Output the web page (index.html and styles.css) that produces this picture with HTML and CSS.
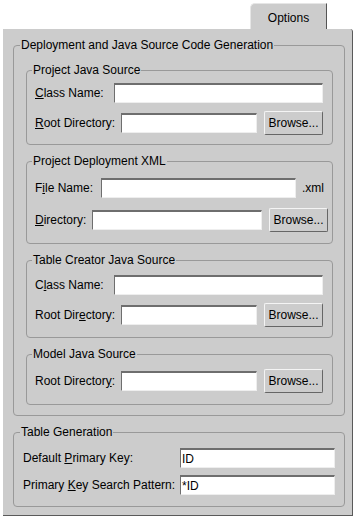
FILE: index.html
```html
<!DOCTYPE html>
<html>
<head>
<meta charset="utf-8">
<link rel="stylesheet" href="styles.css">
</head>
<body>
<div class="tabs">
  <div class="tab">Options</div>
</div>
<div class="panel">
  <fieldset class="group outer">
    <legend>Deployment and Java Source Code Generation</legend>

    <fieldset class="group inner fs1">
      <legend>Project Java Source</legend>
      <div class="row">
        <span class="label l-class"><u>C</u>lass Name:</span>
        <span class="input w-class"></span>
      </div>
      <div class="row brow">
        <span class="label l-root"><u>R</u>oot Directory:</span>
        <span class="input w-root"></span>
        <span class="button">Browse...</span>
      </div>
    </fieldset>

    <fieldset class="group inner fs2">
      <legend>Project Deployment XML</legend>
      <div class="row">
        <span class="label l-file">F<u>i</u>le Name:</span>
        <span class="input w-file"></span>
        <span class="suffix">.xml</span>
      </div>
      <div class="row brow">
        <span class="label l-dir"><u>D</u>irectory:</span>
        <span class="input w-dir"></span>
        <span class="button">Browse...</span>
      </div>
    </fieldset>

    <fieldset class="group inner fs3">
      <legend>Table Creator Java Source</legend>
      <div class="row">
        <span class="label l-class">C<u>l</u>ass Name:</span>
        <span class="input w-class"></span>
      </div>
      <div class="row brow">
        <span class="label l-root">Root Dir<u>e</u>ctory:</span>
        <span class="input w-root"></span>
        <span class="button">Browse...</span>
      </div>
    </fieldset>

    <fieldset class="group inner fs4">
      <legend>Model Java Source</legend>
      <div class="row brow">
        <span class="label l-root">Root Director<u>y</u>:</span>
        <span class="input w-root"></span>
        <span class="button">Browse...</span>
      </div>
    </fieldset>
  </fieldset>

  <fieldset class="group table-gen">
    <legend>Table Generation</legend>
    <div class="row krow">
      <span class="label klabel">Default <u>P</u>rimary Key:</span>
      <span class="input w-key">ID</span>
    </div>
    <div class="row krow">
      <span class="label klabel">Primary <u>K</u>ey Search Pattern:</span>
      <span class="input w-key">*ID</span>
    </div>
  </fieldset>
</div>
</body>
</html>
```

FILE: styles.css
```css
html, body {
  margin: 0;
  padding: 0;
  background: #ffffff;
}
body {
  font-family: "Liberation Sans", Arial, sans-serif;
  font-size: 12px;
  color: #000;
  width: 357px;
  height: 518px;
  overflow: hidden;
}
u {
  text-decoration: underline;
  text-underline-offset: 1px;
}
.tabs {
  display: flex;
  padding-left: 250px;
  padding-top: 3px;
}
.tab {
  width: 77px;
  height: 26px;
  box-sizing: border-box;
  background: #cccccc;
  border-top: 1px solid #e6e6e6;
  border-left: 1px solid #e6e6e6;
  border-right: 1px solid #555555;
  border-top-left-radius: 5px;
  display: flex;
  align-items: center;
  justify-content: center;
  padding-top: 2px;
}
.panel {
  margin-left: 3px;
  width: 350px;
  height: 487px;
  box-sizing: border-box;
  background: #cccccc;
  border-right: 1px solid #5a5a5a;
  border-bottom: 1px solid #5a5a5a;
  border-top-right-radius: 3px;
  padding: 9px 0 0 10px;
}
.group {
  margin: 0;
  border: 1px solid #999999;
  border-radius: 4px;
  min-width: 0;
  box-sizing: border-box;
}
.group legend {
  padding: 0 1px;
  line-height: 14px;
  height: 14px;
}
.outer {
  width: 332px;
  padding: 11px 11px 10px 12px;
}
.outer > legend { margin-left: -6px; }
.inner {
  width: 307px;
  padding: 0 0 10px 8px;
}
.inner > legend { margin-left: -3px; }
.inner + .inner {
  margin-top: 9px;
}
.fs1 { padding-top: 6px; padding-bottom: 9px; }
.fs2 { padding-top: 10px; padding-bottom: 11px; }
.fs3 { padding-top: 8px; padding-bottom: 10px; }
.fs4 { padding-top: 8px; padding-bottom: 11px; }
.row {
  display: flex;
  align-items: center;
  height: 20px;
}
.brow {
  height: 24px;
  margin-top: 8px;
}
.fs2 .brow { margin-top: 10px; }
.fs4 .brow { margin-top: 0; }
.label {
  white-space: nowrap;
  flex: none;
}
.l-class { width: 79px; }
.l-root { width: 86px; }
.l-file { width: 66px; }
.l-dir { width: 57px; }
.input {
  display: flex;
  align-items: center;
  box-sizing: border-box;
  height: 20px;
  background: #ffffff;
  border-top: 2px solid #6e6e6e;
  border-left: 1px solid #6e6e6e;
  border-right: 1px solid #eeeeee;
  border-bottom: 1px solid #eeeeee;
  padding-left: 1px;
  flex: none;
}
.w-class { width: 209px; }
.w-root { width: 136px; }
.w-file { width: 195px; }
.w-dir { width: 170px; }
.suffix { margin-left: 6px; }
.button {
  box-sizing: border-box;
  height: 24px;
  width: 59px;
  margin-left: 7px;
  display: flex;
  align-items: center;
  justify-content: center;
  border-top: 1px solid #f4f4f4;
  border-left: 1px solid #f4f4f4;
  border-right: 1px solid #666666;
  border-bottom: 1px solid #666666;
  border-radius: 2px;
  flex: none;
}
.table-gen {
  margin-top: 9px;
  width: 332px;
  padding: 9px 9px 11px 9px;
}
.table-gen > legend { margin-left: -3px; }
.krow {
  height: 20px;
}
.krow + .krow {
  margin-top: 7px;
}
.klabel {
  width: 157px;
}
.w-key {
  width: 155px;
}
```
